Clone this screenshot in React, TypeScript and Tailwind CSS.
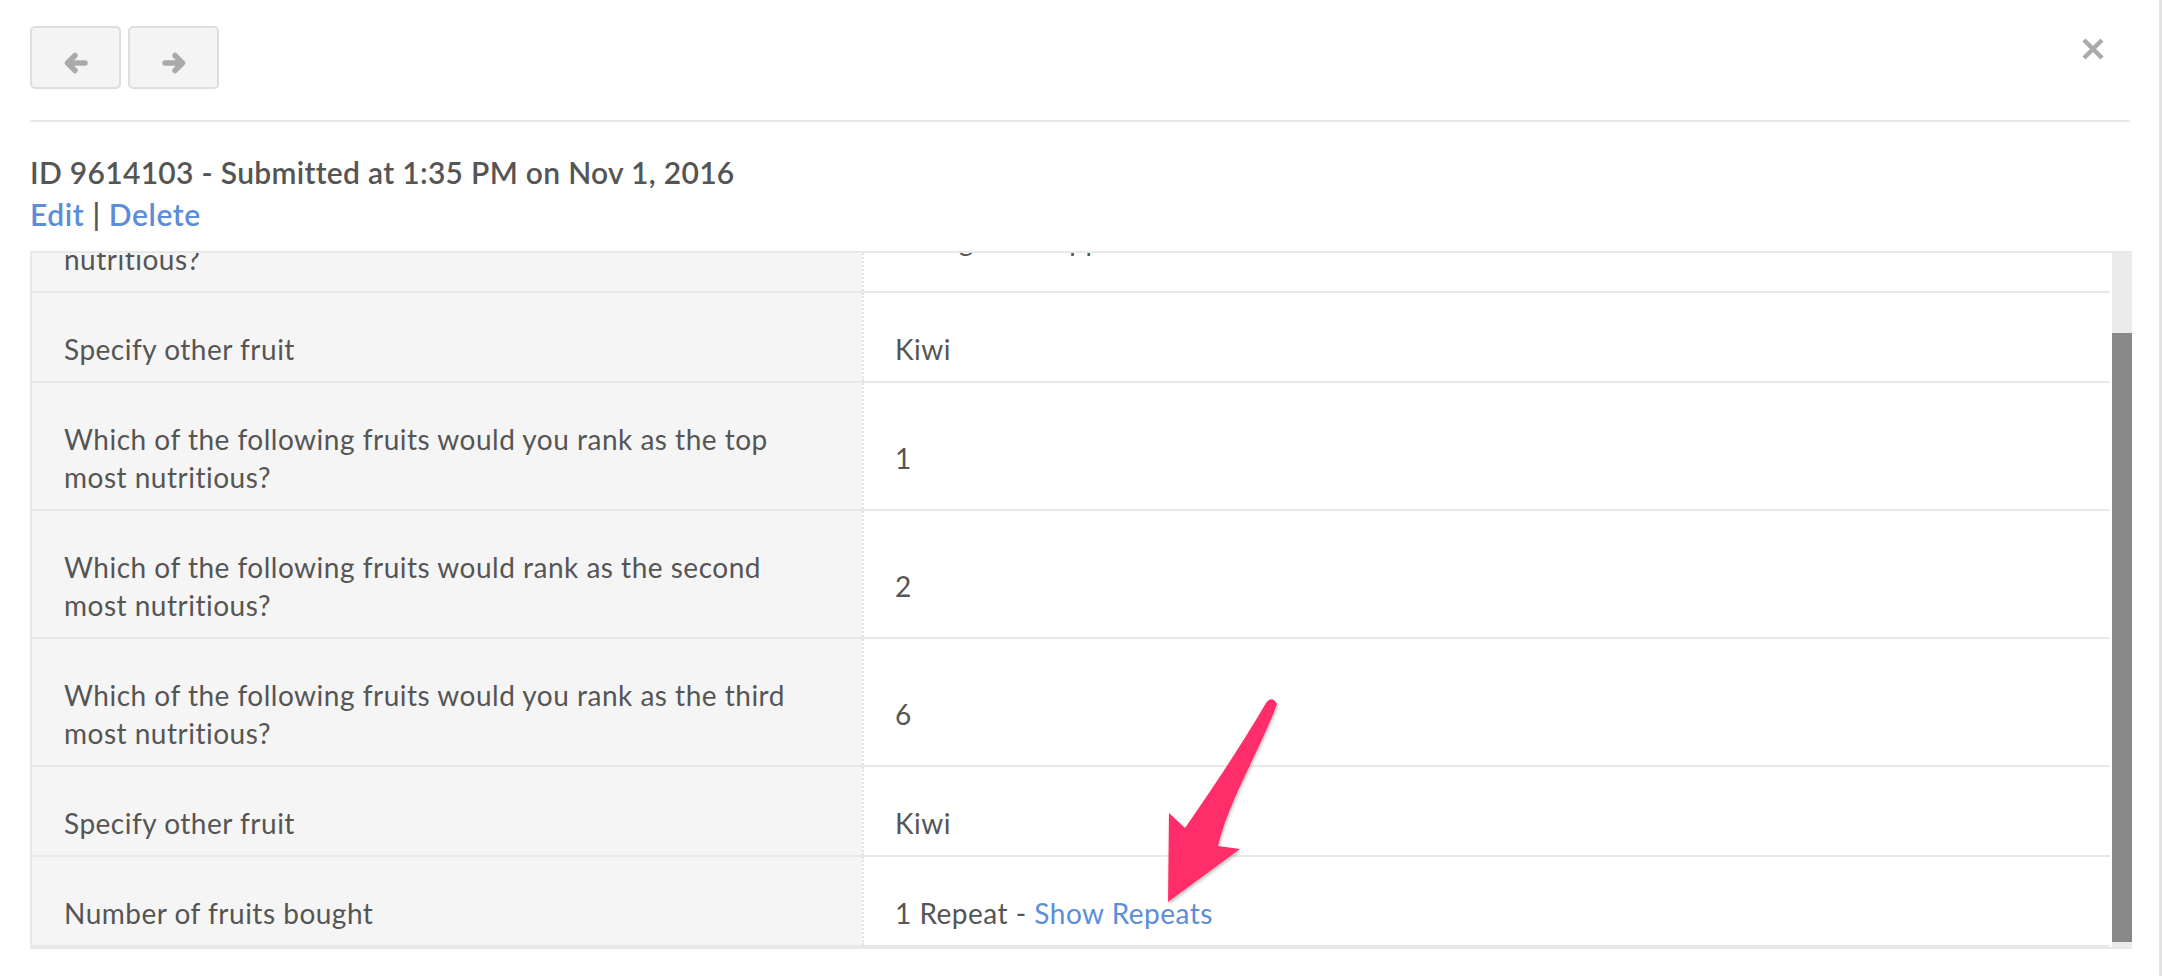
type Row = {
  question: string[];
  answer: string;
  link?: string;
};

const rows: Row[] = [
  {
    question: ["Which of the following fruits would you rank as the least", "nutritious?"],
    answer: "Orange and Apple",
  },
  { question: ["Specify other fruit"], answer: "Kiwi" },
  {
    question: ["Which of the following fruits would you rank as the top", "most nutritious?"],
    answer: "1",
  },
  {
    question: ["Which of the following fruits would rank as the second", "most nutritious?"],
    answer: "2",
  },
  {
    question: ["Which of the following fruits would you rank as the third", "most nutritious?"],
    answer: "6",
  },
  { question: ["Specify other fruit"], answer: "Kiwi" },
  { question: ["Number of fruits bought"], answer: "1 Repeat - ", link: "Show Repeats" },
];

function NavButton({ dir }: { dir: "left" | "right" }) {
  return (
    <button className="flex h-[63px] w-[91px] items-center justify-center rounded-[5px] border-2 border-[#dedede] bg-[#f4f4f4] pt-[11px]">
      <svg width="26" height="22" viewBox="0 0 26 22" className={dir === "right" ? "-scale-x-100" : ""}>
        <path
          d="M22 11 H5 M12 3.5 L4.5 11 L12 18.5"
          fill="none"
          stroke="#aaaaaa"
          strokeWidth="5.5"
          strokeLinecap="round"
          strokeLinejoin="round"
        />
      </svg>
    </button>
  );
}

export default function App() {
  return (
    <div className="relative h-[976px] w-[2162px] overflow-hidden border-r-[3px] border-[#e2e2e2] bg-white pl-[30px] pr-[27px] font-['Lato','Open_Sans',sans-serif] text-[#555555]">
      <div className="flex items-start justify-between pt-[26px]">
        <div className="flex gap-[7px]">
          <NavButton dir="left" />
          <NavButton dir="right" />
        </div>

        <button className="mr-[27px] mt-[11px]">
          <svg width="24" height="24" viewBox="0 0 24 24">
            <path d="M3 3 L21 21 M21 3 L3 21" stroke="#aaaaaa" strokeWidth="4.5" />
          </svg>
        </button>
      </div>

      <div className="mr-[2px] mt-[31px] h-[2px] bg-[#e8e8e8]" />

      <div className="mt-[31px] text-[30px] font-semibold leading-[39px] tracking-[0.3px]">
        <h1>ID 9614103 - Submitted at 1:35 PM on Nov 1, 2016</h1>
        <p className="pt-[3px] tracking-[0.6px]">
          <a className="text-[#5b8dd9]">Edit</a>
          <span> | </span>
          <a className="text-[#5b8dd9]">Delete</a>
        </p>
      </div>

      <div className="mt-[17px] flex h-[698px] border-2 border-r-0 border-[#e8e8e8]">
        <div className="flex-1 overflow-hidden">
          <div className="-mt-[88px]">
            {rows.map((row, i) => (
              <div
                key={i}
                className="flex border-b-2 border-[#e8e8e8] text-[28px] leading-[38px] tracking-[0.5px]"
              >
                <div className="w-[830px] shrink-0 bg-[#f5f5f5] pb-[13px] pl-[32px] pt-[37px]">
                  {row.question.map((line) => (
                    <div key={line} className="whitespace-nowrap">
                      {line}
                    </div>
                  ))}
                </div>

                <div className="flex flex-1 items-center border-l-2 border-dotted border-[#e2e2e2] pb-[13px] pl-[31px] pt-[37px]">
                  <span className="whitespace-pre">
                    {row.answer}
                    {row.link && <a className="text-[#5b8dd9]">{row.link}</a>}
                  </span>
                </div>
              </div>
            ))}
          </div>
        </div>

        <div className="ml-[2px] flex w-[20px] flex-col bg-[#ebebeb]">
          <div className="h-[80px]" />
          <div className="h-[609px] bg-[#888888]" />
        </div>
      </div>

      {/* annotation arrow */}
      <svg
        className="pointer-events-none absolute left-0 top-0"
        width="2162"
        height="976"
        viewBox="0 0 2162 976"
      >
        <defs>
          <filter id="arrowShadow" x="-20%" y="-20%" width="140%" height="140%">
            <feDropShadow dx="1" dy="2" stdDeviation="1.5" floodColor="#000" floodOpacity="0.25" />
          </filter>
        </defs>
        <path
          d="M1168 902 L1169 813 L1185 828 C1213 788 1244 741 1266 703 Q1272 695 1277 704 C1262 746 1229 800 1218 846 L1240 849 Z"
          fill="#ff2e6a"
          filter="url(#arrowShadow)"
        />
      </svg>
    </div>
  );
}
